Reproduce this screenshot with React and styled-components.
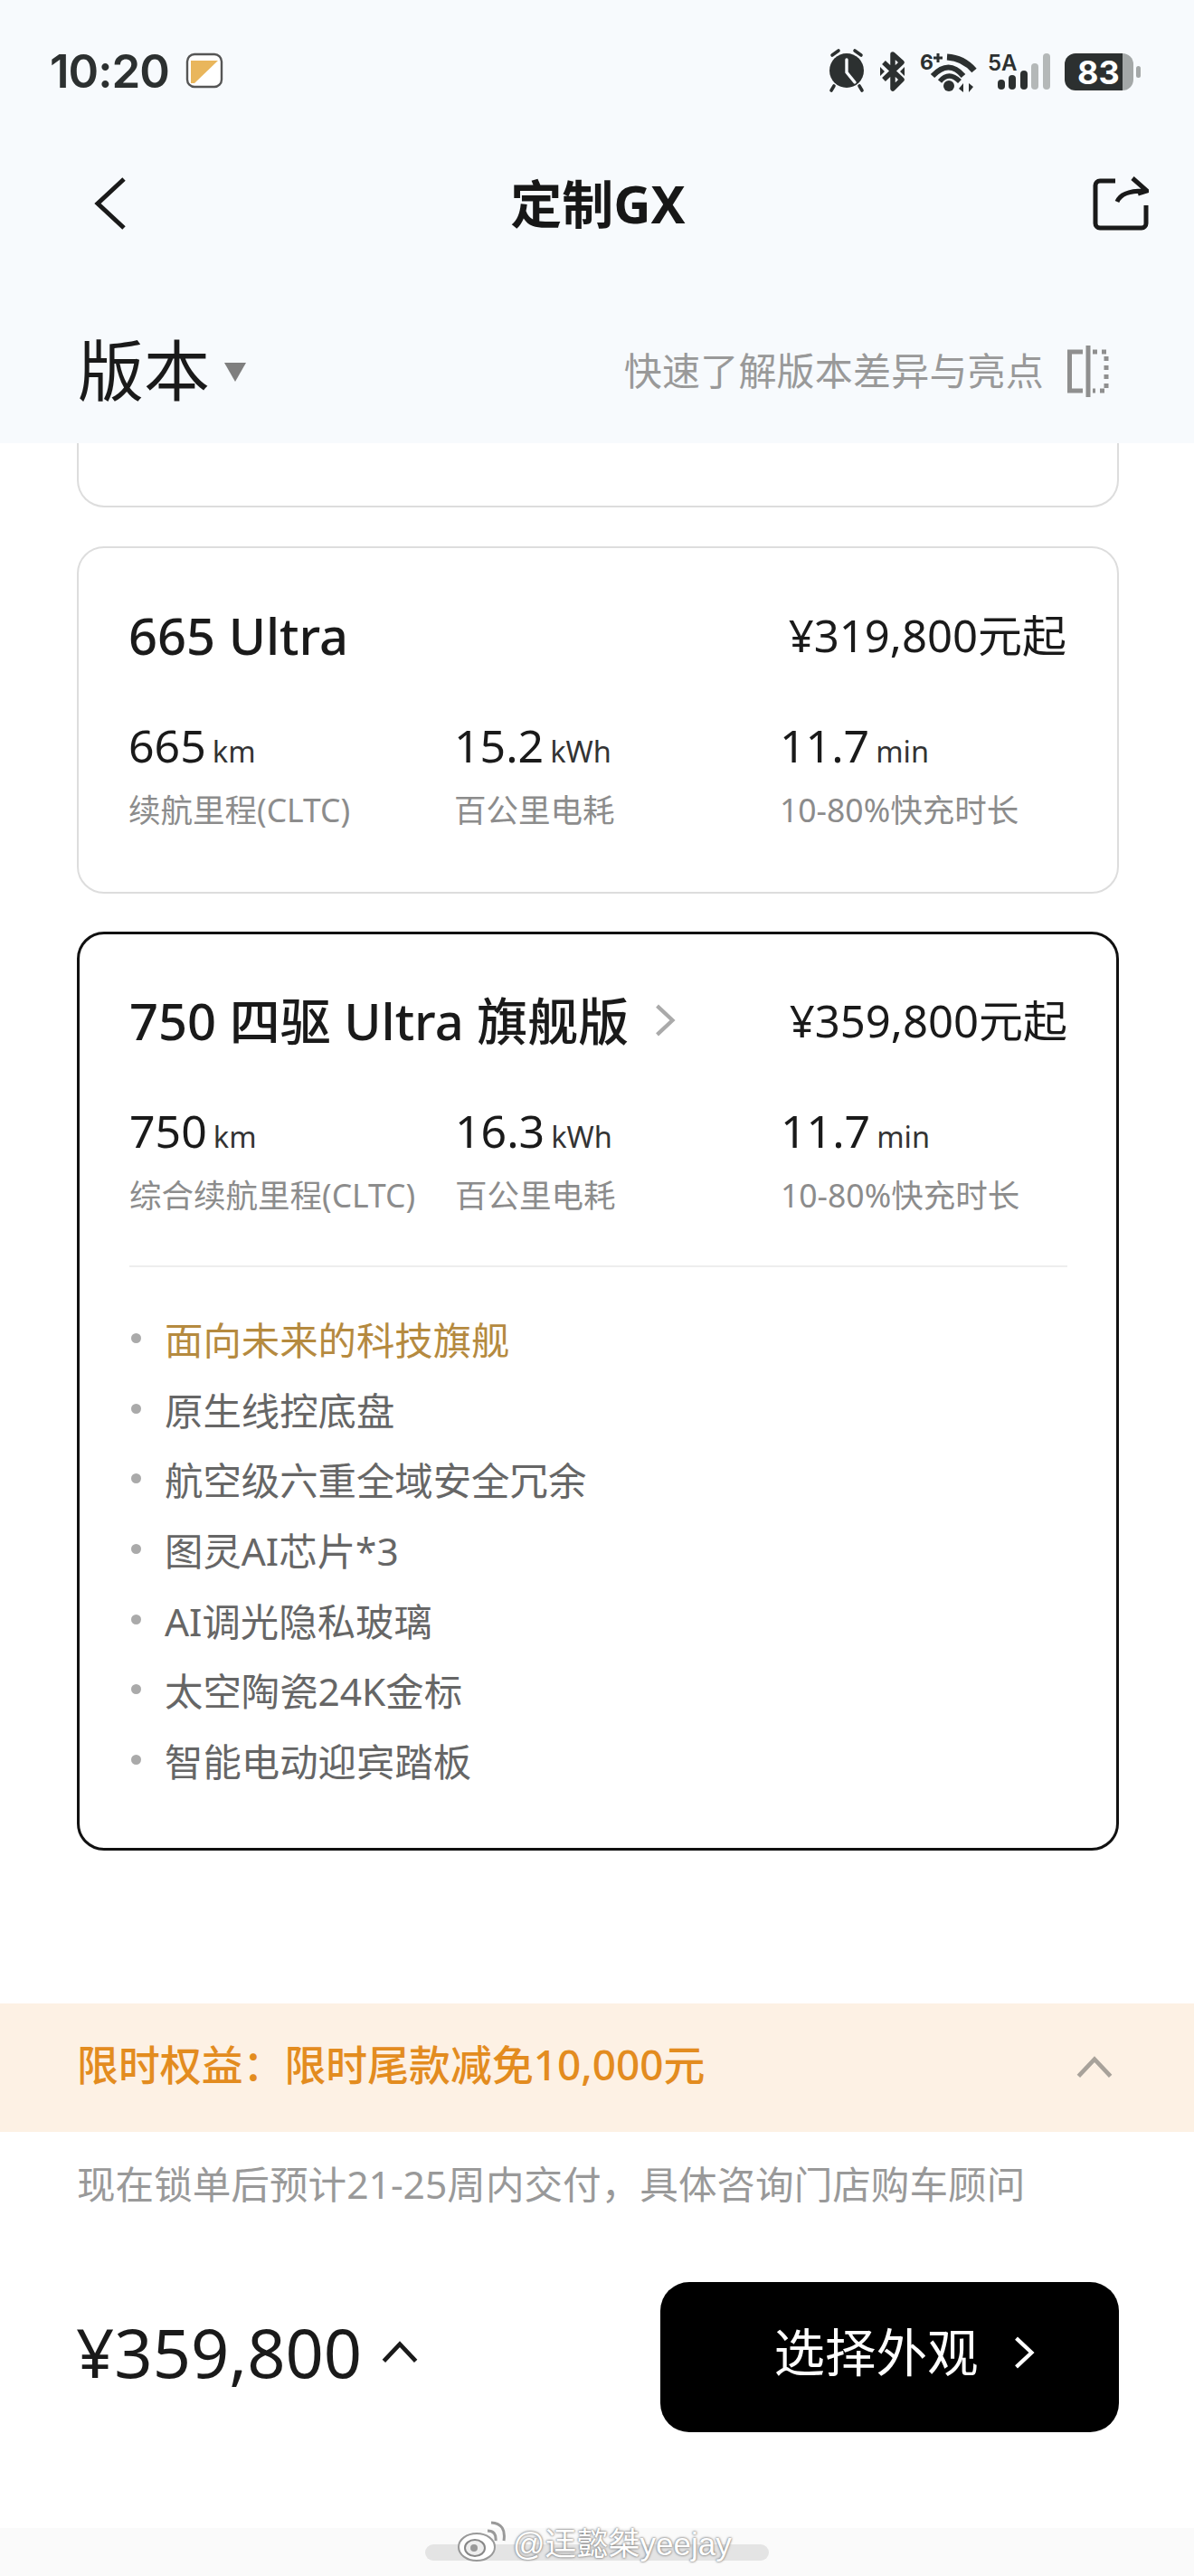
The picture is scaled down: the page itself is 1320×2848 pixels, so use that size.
import React from "react";
import styled, { createGlobalStyle } from "styled-components";

const GlobalStyle = createGlobalStyle`
  html, body {
    margin: 0;
    padding: 0;
    background: #fff;
  }
  * {
    box-sizing: border-box;
  }
  body {
    font-family: "Noto Sans", "Noto Sans CJK SC", sans-serif;
    color: #1a1a1a;
  }
`;

const Page = styled.div`
  width: 1320px;
  height: 2848px;
  display: flex;
  flex-direction: column;
  overflow: hidden;
  background: #fff;
`;

const Header = styled.header`
  height: 490px;
  flex: none;
  display: flex;
  flex-direction: column;
  background: #f7fafd;
`;

const StatusBar = styled.div`
  height: 44px;
  margin-top: 56px;
  padding: 0 59px 0 55px;
  display: flex;
  align-items: center;
  justify-content: space-between;
`;

const StatusLeft = styled.div`
  display: flex;
  align-items: center;
  gap: 18px;
`;

const Time = styled.span`
  font-family: Inter, sans-serif;
  font-size: 51px;
  font-weight: 600;
  color: #2c3030;
  letter-spacing: -1px;
`;

const StatusRight = styled.div`
  display: flex;
  align-items: center;
`;

const NavBar = styled.div`
  height: 100px;
  margin-top: 75px;
  padding: 0 50px 0 104px;
  display: flex;
  align-items: center;
  justify-content: space-between;
`;

const NavTitle = styled.h1`
  margin: 0 26px 0 0;
  font-size: 57px;
  font-weight: 700;
  line-height: 1;
  color: #171717;
`;

const VersionRow = styled.div`
  height: 100px;
  margin-top: 85px;
  padding: 0 94px 0 86px;
  display: flex;
  align-items: center;
  justify-content: space-between;
`;

const VersionTitle = styled.div`
  display: flex;
  align-items: center;
  gap: 14px;
  padding-bottom: 4px;
  font-size: 73px;
  line-height: 1;
  color: #1a1a1a;
`;

const Caret = styled.svg`
  margin-top: 6px;
`;

const CompareLink = styled.div`
  display: flex;
  align-items: center;
  gap: 26px;
  font-size: 42px;
  line-height: 1;
  letter-spacing: 0.2px;
  color: #999;
`;

const Main = styled.main`
  flex: 1;
  padding: 0 83px 0 85px;
  display: flex;
  flex-direction: column;
`;

const ClippedCard = styled.div`
  height: 71px;
  border: 2px solid #ddd;
  border-top: none;
  border-radius: 0 0 30px 30px;
  margin-bottom: 43px;
`;

const Card = styled.section`
  border: ${(props) => (props.$active ? "3px solid #111" : "2px solid #ddd")};
  border-radius: 30px;
  padding: ${(props) => (props.$active ? "58px 54px 59px 55px" : "59px 56px 66px 55px")};
  margin-bottom: 42px;
`;

const TitleRow = styled.div`
  height: 80px;
  padding-bottom: 6px;
  display: flex;
  align-items: center;
  justify-content: space-between;
`;

const CardTitle = styled.div`
  display: flex;
  align-items: center;
  gap: 22px;
  font-size: 56px;
  font-weight: 500;
  line-height: 1;
  color: #1a1a1a;
`;

const Price = styled.div`
  font-size: 49px;
  line-height: 1;
  color: #1a1a1a;
`;

const Stats = styled.div`
  display: grid;
  grid-template-columns: repeat(3, 360px);
  margin-top: 53px;
`;

const Stat = styled.div`
  display: flex;
  flex-direction: column;
`;

const StatValue = styled.div`
  height: 60px;
  display: flex;
  align-items: baseline;
  gap: 7px;
  font-size: 50px;
  line-height: 52px;
  color: #1a1a1a;
`;

const StatUnit = styled.span`
  font-size: 32.5px;
  color: #333;
`;

const StatLabel = styled.div`
  height: 50px;
  margin-top: 12px;
  font-size: 35.5px;
  line-height: 50px;
  color: #8c8c8c;
  white-space: nowrap;
`;

const Divider = styled.div`
  height: 2px;
  margin: 53px 0 40px;
  background: #eee;
`;

const Features = styled.ul`
  list-style: none;
  margin: 0;
  padding: 0;
`;

const Feature = styled.li`
  height: 77.6px;
  display: flex;
  align-items: center;
  gap: 26px;
  font-size: 42.4px;
  color: ${(props) => (props.$gold ? "#b58a3f" : "#666")};

  &::before {
    content: "";
    width: 11px;
    height: 11px;
    margin-left: 2px;
    border-radius: 50%;
    background: #aaa;
  }
`;

const Footer = styled.footer`
  flex: none;
  position: relative;
`;

const Banner = styled.div`
  height: 142px;
  padding: 0 90px 0 85px;
  display: flex;
  align-items: center;
  justify-content: space-between;
  background: #fdf1e4;
`;

const BannerText = styled.span`
  padding-bottom: 6px;
  font-size: 45.9px;
  font-weight: 500;
  line-height: 1;
  color: #e38c1f;
`;

const Note = styled.div`
  height: 60px;
  margin-top: 27px;
  padding-left: 85px;
  font-size: 42.6px;
  line-height: 60px;
  color: #999;
`;

const BuyRow = styled.div`
  margin-top: 79px;
  padding: 0 83px 0 84px;
  display: flex;
  align-items: center;
  justify-content: space-between;
`;

const Total = styled.div`
  display: flex;
  align-items: center;
  gap: 22px;
  padding-bottom: 10px;
  font-size: 74px;
  line-height: 1;
  color: #1a1a1a;
`;

const BuyButton = styled.button`
  width: 507px;
  height: 166px;
  padding: 0 0 10px 38px;
  border: none;
  border-radius: 32px;
  display: flex;
  align-items: center;
  justify-content: center;
  gap: 32px;
  background: #000;
  color: #fff;
  font-family: inherit;
  font-size: 56.5px;
  line-height: 1;
`;

const HomeBar = styled.div`
  height: 53px;
  margin-top: 106px;
  display: flex;
  align-items: center;
  justify-content: center;
  background: #fafafa;
`;

const HomeIndicator = styled.div`
  width: 380px;
  height: 18px;
  border-radius: 9px;
  background: #e4e4e4;
`;

const Watermark = styled.div`
  position: absolute;
  left: 505px;
  bottom: 13px;
  display: flex;
  align-items: center;
  gap: 6px;
  font-family: "Liberation Sans", "Noto Sans CJK SC", sans-serif;
  font-size: 35px;
  color: #fff;
  text-shadow: 0 0 3px #777, 0 0 2px #888;
`;

const AppBadge = () => (
  <svg width="42" height="40" viewBox="0 0 42 40">
    <rect x="2" y="2" width="38" height="36" rx="8" fill="#fff" stroke="#555" strokeWidth="2.4" />
    <path d="M6 9h30L10 34H6z" fill="#e9b65c" />
  </svg>
);

const StatusIcons = () => (
  <svg width="346" height="50" viewBox="0 0 346 50" fill="none">
    {/* alarm */}
    <circle cx="21" cy="25" r="19" fill="#2c3030" />
    <path d="M21 13v14l9 11" stroke="#f7fafd" strokeWidth="3.4" strokeLinecap="round" />
    <path d="M5 8l7-5M37 8l-7-5M7 42l-3 5M35 42l3 5" stroke="#2c3030" strokeWidth="3.6" strokeLinecap="round" />
    {/* bluetooth */}
    <path
      d="M62 16l20 19-10 10V7l10 9-20 19"
      stroke="#2c3030"
      strokeWidth="5.5"
      strokeLinejoin="round"
    />
    <path d="M58 21v10l5-5zM85 21v10l-5-5z" fill="#2c3030" />
    {/* wifi 6+ */}
    <text x="102" y="24" fontFamily="Inter, sans-serif" fontSize="23" fontWeight="700" fill="#2c3030">6</text>
    <path d="M117 11h10M122 6v10" stroke="#2c3030" strokeWidth="3" />
    <path d="M132 10q18 1 30 15" stroke="#2c3030" strokeWidth="7" />
    <path d="M116 31q18-19 34 0" stroke="#2c3030" strokeWidth="6" />
    <path d="M124 37q10-12 22 0" stroke="#2c3030" strokeWidth="5.5" />
    <circle cx="134" cy="42" r="6" fill="#2c3030" />
    <path d="M150 49V39l-5 6zM156 39v10l5-6z" fill="#2c3030" />
    {/* signal */}
    <text x="177" y="25" fontFamily="Inter, sans-serif" fontSize="24" fontWeight="600" fill="#2c3030">5A</text>
    <rect x="188" y="35" width="8" height="11" rx="4" fill="#2c3030" />
    <rect x="200" y="30" width="8" height="16" rx="4" fill="#2c3030" />
    <rect x="213" y="25" width="8" height="21" rx="4" fill="#2c3030" />
    <rect x="225" y="17" width="8" height="29" rx="4" fill="#b4b8b8" />
    <rect x="238" y="6" width="8" height="40" rx="4" fill="#b4b8b8" />
    {/* battery */}
    <path d="M320 6h6a12 12 0 0 1 12 12v17a12 12 0 0 1-12 12h-6z" fill="#a4a8a8" />
    <path d="M274 6h52v41h-52a12 12 0 0 1-12-12V18a12 12 0 0 1 12-12z" fill="#2c3030" />
    <rect x="341" y="20" width="5" height="13" rx="2.5" fill="#a4a8a8" />
    <text x="276" y="40" fontFamily="Inter, sans-serif" fontSize="36" fontWeight="700" fill="#fff">83</text>
  </svg>
);

const BackIcon = () => (
  <svg width="36" height="58" viewBox="0 0 36 58" fill="none">
    <path d="M33 2L4 29l29 27" stroke="#1a1a1a" strokeWidth="5" />
  </svg>
);

const ShareIcon = () => (
  <svg width="62" height="60" viewBox="0 0 62 60" fill="none">
    <path
      d="M25 5H8a5 5 0 0 0-5 5v42a5 5 0 0 0 5 5h46a5 5 0 0 0 5-5V32"
      stroke="#1a1a1a"
      strokeWidth="5"
    />
    <path d="M27 28q5-13 33-12M44 2l16 14-10 3" stroke="#1a1a1a" strokeWidth="5" />
  </svg>
);

const CompareIcon = () => (
  <svg width="46" height="57" viewBox="0 0 46 57" fill="none">
    <path d="M17 7H2.5v43H17M23 0v57" stroke="#8f8f8f" strokeWidth="5" />
    <path d="M28 7h15v43H28" stroke="#8f8f8f" strokeWidth="5" strokeDasharray="5 5" />
  </svg>
);

const Chevron = ({ dir = "right", size = 34, color = "#1a1a1a", weight = 5 }) => (
  <svg
    width={size}
    height={size}
    viewBox="0 0 34 34"
    fill="none"
    style={{ transform: dir === "up" ? "rotate(-90deg)" : "none" }}
  >
    <path d="M9 2l16 15L9 32" stroke={color} strokeWidth={weight} />
  </svg>
);

const WeiboIcon = () => (
  <svg width="56" height="48" viewBox="0 0 56 48" fill="none">
    <ellipse cx="22" cy="30" rx="20" ry="15" fill="#fff" stroke="#999" strokeWidth="2" />
    <ellipse cx="20" cy="31" rx="11" ry="9" fill="#eee" stroke="#888" strokeWidth="2" />
    <circle cx="19" cy="31" r="4" fill="#999" />
    <path d="M34 12q10 0 9 11M38 3q17 1 14 20" stroke="#999" strokeWidth="3" />
  </svg>
);

const Spec = ({ value, unit, label }) => (
  <Stat>
    <StatValue>
      {value}
      <StatUnit>{unit}</StatUnit>
    </StatValue>
    <StatLabel>{label}</StatLabel>
  </Stat>
);

const features = [
  "面向未来的科技旗舰",
  "原生线控底盘",
  "航空级六重全域安全冗余",
  "图灵AI芯片*3",
  "AI调光隐私玻璃",
  "太空陶瓷24K金标",
  "智能电动迎宾踏板",
];

const App = () => (
  <Page>
    <GlobalStyle />
    <Header>
      <StatusBar>
        <StatusLeft>
          <Time>10:20</Time>
          <AppBadge />
        </StatusLeft>
        <StatusRight>
          <StatusIcons />
        </StatusRight>
      </StatusBar>
      <NavBar>
        <BackIcon />
        <NavTitle>定制GX</NavTitle>
        <ShareIcon />
      </NavBar>
      <VersionRow>
        <VersionTitle>
          版本
          <Caret width="28" height="24" viewBox="0 0 28 24">
            <path d="M2 2h24L14 23z" fill="#7f7f7f" />
          </Caret>
        </VersionTitle>
        <CompareLink>
          快速了解版本差异与亮点
          <CompareIcon />
        </CompareLink>
      </VersionRow>
    </Header>
    <Main>
      <ClippedCard />
      <Card>
        <TitleRow>
          <CardTitle>665 Ultra</CardTitle>
          <Price>¥319,800元起</Price>
        </TitleRow>
        <Stats>
          <Spec value="665" unit="km" label="续航里程(CLTC)" />
          <Spec value="15.2" unit="kWh" label="百公里电耗" />
          <Spec value="11.7" unit="min" label="10-80%快充时长" />
        </Stats>
      </Card>
      <Card $active>
        <TitleRow>
          <CardTitle>
            750 四驱 Ultra 旗舰版
            <Chevron color="#aaa" size={36} weight={4} />
          </CardTitle>
          <Price>¥359,800元起</Price>
        </TitleRow>
        <Stats>
          <Spec value="750" unit="km" label="综合续航里程(CLTC)" />
          <Spec value="16.3" unit="kWh" label="百公里电耗" />
          <Spec value="11.7" unit="min" label="10-80%快充时长" />
        </Stats>
        <Divider />
        <Features>
          {features.map((text, i) => (
            <Feature key={text} $gold={i === 0}>
              {text}
            </Feature>
          ))}
        </Features>
      </Card>
    </Main>
    <Footer>
      <Banner>
        <BannerText>{"限时权益\uFF1A限时尾款减免10,000元"}</BannerText>
        <Chevron dir="up" color="#a8a29a" size={40} weight={4} />
      </Banner>
      <Note>{"现在锁单后预计21-25周内交付\uFF0C具体咨询门店购车顾问"}</Note>
      <BuyRow>
        <Total>
          ¥359,800
          <Chevron dir="up" size={40} weight={4} />
        </Total>
        <BuyButton>
          选择外观
          <Chevron color="#fff" size={36} weight={4} />
        </BuyButton>
      </BuyRow>
      <HomeBar>
        <HomeIndicator />
      </HomeBar>
      <Watermark>
        <WeiboIcon />
        @迋懿桀yeejay
      </Watermark>
    </Footer>
  </Page>
);

export default App;
